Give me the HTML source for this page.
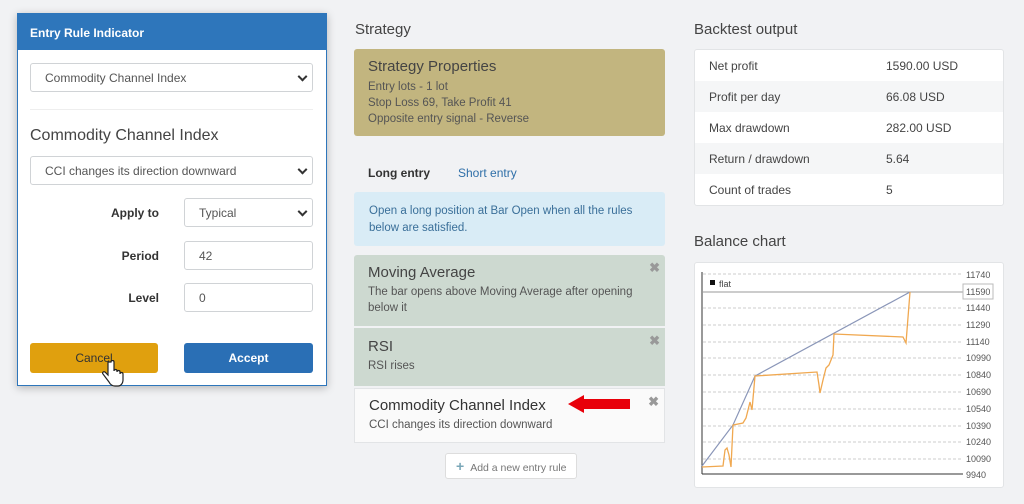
<!DOCTYPE html>
<html><head><meta charset="utf-8"><style>
*{box-sizing:border-box;margin:0;padding:0}
body{width:1024px;height:504px;background:#f1f2f4;font-family:"Liberation Sans",sans-serif;position:relative;overflow:hidden;color:#333}
.a{position:absolute}
.sel{position:absolute;background:#fff;border:1px solid #d0d3d6;border-radius:3px;font-size:12px;color:#555;padding-left:14px;display:flex;align-items:center}
.sel .ch{position:absolute;right:6px;top:50%;width:7px;height:7px;border-right:2px solid #333;border-bottom:2px solid #333;transform:translateY(-70%) rotate(45deg)}
.lbl{position:absolute;font-size:12px;font-weight:bold;color:#333;text-align:right;width:80px}
.h{position:absolute;font-size:15px;color:#444}
.x{position:absolute;right:5px;top:5px;font-size:13px;color:#999;font-weight:bold}
.row{position:absolute;left:0;right:0;height:31px;font-size:12px;color:#444;display:flex;align-items:center}
.row span:first-child{position:absolute;left:14px}
.row span:last-child{position:absolute;left:191px}
</style></head><body>
<div class="a" style="left:17px;top:13px;width:310px;height:373px;background:#fff;border:1px solid #2e76bb;box-shadow:0 2px 8px rgba(0,0,0,.25)">
<div style="height:36px;background:#2e76bb;color:#fff;font-weight:bold;font-size:12px;padding:12px 0 0 12px">Entry Rule Indicator</div>
</div>
<div class="sel" style="left:30px;top:63px;width:283px;height:29px">Commodity Channel Index<i class="ch"></i></div>
<div class="a" style="left:30px;top:109px;width:283px;height:1px;background:#eee"></div>
<div class="a" style="left:30px;top:127px;font-size:16px;color:#444">Commodity Channel Index</div>
<div class="sel" style="left:30px;top:156px;width:283px;height:29px">CCI changes its direction downward<i class="ch"></i></div>
<div class="lbl" style="left:79px;top:206px">Apply to</div>
<div class="sel" style="left:184px;top:198px;width:129px;height:29px">Typical<i class="ch"></i></div>
<div class="lbl" style="left:79px;top:249px">Period</div>
<div class="sel" style="left:184px;top:241px;width:129px;height:29px">42</div>
<div class="lbl" style="left:79px;top:291px">Level</div>
<div class="sel" style="left:184px;top:283px;width:129px;height:29px">0</div>
<div class="a" style="left:30px;top:343px;width:128px;height:30px;background:#e0a00e;border-radius:3px;font-size:12px;color:#333;text-align:center;line-height:30px">Cancel</div>
<div class="a" style="left:184px;top:343px;width:129px;height:30px;background:#2a6fb5;border-radius:3px;font-size:12px;color:#fff;font-weight:bold;text-align:center;line-height:30px">Accept</div>
<svg class="a" style="left:102px;top:360px" width="24" height="28" viewBox="0 0 24 28"><path d="M6 2v13l-3-3c-2-1-3 1-2 2l6 8c1 2 3 4 6 4h3c3 0 5-3 5-6v-6c0-2-3-2-3 0v-2c0-2-3-2-3 0v-1c0-2-3-2-3 0V2c0-2-3-2-3 0z" fill="#fff" stroke="#222" stroke-width="1.2"/></svg>
<div class="h" style="left:355px;top:21px">Strategy</div>
<div class="a" style="left:354px;top:49px;width:311px;height:87px;background:#c2b57f;border-radius:3px;padding:9px 0 0 14px;color:#444">
<div style="font-size:15px;margin-bottom:4px">Strategy Properties</div>
<div style="font-size:11.5px;line-height:16px;color:#555">Entry lots - 1 lot<br>Stop Loss 69, Take Profit 41<br>Opposite entry signal - Reverse</div></div>
<div class="a" style="left:368px;top:166px;font-size:12px;font-weight:bold;color:#333">Long entry</div>
<div class="a" style="left:458px;top:166px;font-size:12px;color:#2f6fa8">Short entry</div>
<div class="a" style="left:354px;top:192px;width:311px;height:54px;background:#d9ecf6;border-radius:3px;padding:11px 0 0 15px;font-size:11.5px;line-height:17px;color:#3a6f99">Open a long position at Bar Open when all the rules below are satisfied.</div>
<div class="a" style="left:354px;top:255px;width:311px;height:71px;background:#cdd9d0;border-radius:3px 3px 0 0;padding:9px 14px;color:#444"><div style="font-size:15px;margin-bottom:4px">Moving Average</div><div style="font-size:11.5px;line-height:15.5px;color:#555">The bar opens above Moving Average after opening below it</div><span class="x">✖</span></div>
<div class="a" style="left:354px;top:328px;width:311px;height:58px;background:#cdd9d0;padding:10px 14px;color:#444"><div style="font-size:15px;margin-bottom:5px">RSI</div><div style="font-size:11.5px;color:#555">RSI rises</div><span class="x">✖</span></div>
<div class="a" style="left:354px;top:388px;width:311px;height:55px;background:#fafafa;border:1px solid #e2e4e6;padding:8px 14px;color:#333"><div style="font-size:15px;margin-bottom:5px">Commodity Channel Index</div><div style="font-size:11.5px;color:#555">CCI changes its direction downward</div><span class="x">✖</span></div>
<svg class="a" style="left:568px;top:394px" width="62" height="20"><path d="M0 10L16 1V5H62V15H16V19Z" fill="#e8000a"/></svg>
<div class="a" style="left:445px;top:453px;width:132px;height:26px;background:#fff;border:1px solid #ddd;border-radius:3px;font-size:10.5px;color:#777;line-height:24px;padding-left:10px"><b style="color:#7aa7b8;font-size:14px;margin-right:6px">+</b>Add a new entry rule</div>
<div class="h" style="left:694px;top:21px">Backtest output</div>
<div class="a" style="left:694px;top:49px;width:310px;height:157px;background:#fff;border:1px solid #e2e4e6;border-radius:3px">
<div class="row" style="top:0"><span>Net profit</span><span>1590.00 USD</span></div>
<div class="row" style="top:31px;background:#f5f6f7"><span>Profit per day</span><span>66.08 USD</span></div>
<div class="row" style="top:62px"><span>Max drawdown</span><span>282.00 USD</span></div>
<div class="row" style="top:93px;background:#f5f6f7"><span>Return / drawdown</span><span>5.64</span></div>
<div class="row" style="top:124px"><span>Count of trades</span><span>5</span></div>
</div>
<div class="h" style="left:694px;top:233px">Balance chart</div>
<div class="a" style="left:694px;top:262px;width:310px;height:226px;background:#fff;border:1px solid #e2e4e6;border-radius:3px"></div>
<svg class="a" style="left:0;top:0" width="1024" height="504" font-family="Liberation Sans" font-size="9" fill="#555">
<g stroke="#ccc" stroke-dasharray="3,2" stroke-width="1">
<line x1="703" y1="274" x2="963" y2="274"/><line x1="703" y1="308" x2="963" y2="308"/><line x1="703" y1="325" x2="963" y2="325"/><line x1="703" y1="342" x2="963" y2="342"/><line x1="703" y1="358" x2="963" y2="358"/><line x1="703" y1="375" x2="963" y2="375"/><line x1="703" y1="392" x2="963" y2="392"/><line x1="703" y1="409" x2="963" y2="409"/><line x1="703" y1="426" x2="963" y2="426"/><line x1="703" y1="442" x2="963" y2="442"/><line x1="703" y1="459" x2="963" y2="459"/></g>
<line x1="703" y1="292" x2="963" y2="292" stroke="#999"/>
<line x1="702" y1="272" x2="702" y2="474" stroke="#333"/><line x1="702" y1="474" x2="963" y2="474" stroke="#333"/>
<rect x="963" y="284" width="30" height="15" fill="#fff" stroke="#bbb"/>
<text x="966" y="278">11740</text><text x="966" y="295">11590</text><text x="966" y="311">11440</text><text x="966" y="328">11290</text><text x="966" y="345">11140</text><text x="966" y="361">10990</text><text x="966" y="378">10840</text><text x="966" y="395">10690</text><text x="966" y="412">10540</text><text x="966" y="429">10390</text><text x="966" y="445">10240</text><text x="966" y="462">10090</text><text x="966" y="478">9940</text>
<rect x="710" y="280" width="5" height="5" fill="#111"/><text x="719" y="287" fill="#444">flat</text>
<polyline points="702,466 733,425 755,376 910,292" fill="none" stroke="#8a96b8" stroke-width="1.2"/>
<polyline points="702,467 723,466 725,450 727,448 729,455 731,467 733,425 743,423 746,418 748,410 750,402 752,410 755,376 817,372 819,385 820,393 823,380 826,368 829,365 831,360 833,355 834,334 903,337 906,343 910,292" fill="none" stroke="#f0a850" stroke-width="1.3"/>
</svg>
</body></html>
